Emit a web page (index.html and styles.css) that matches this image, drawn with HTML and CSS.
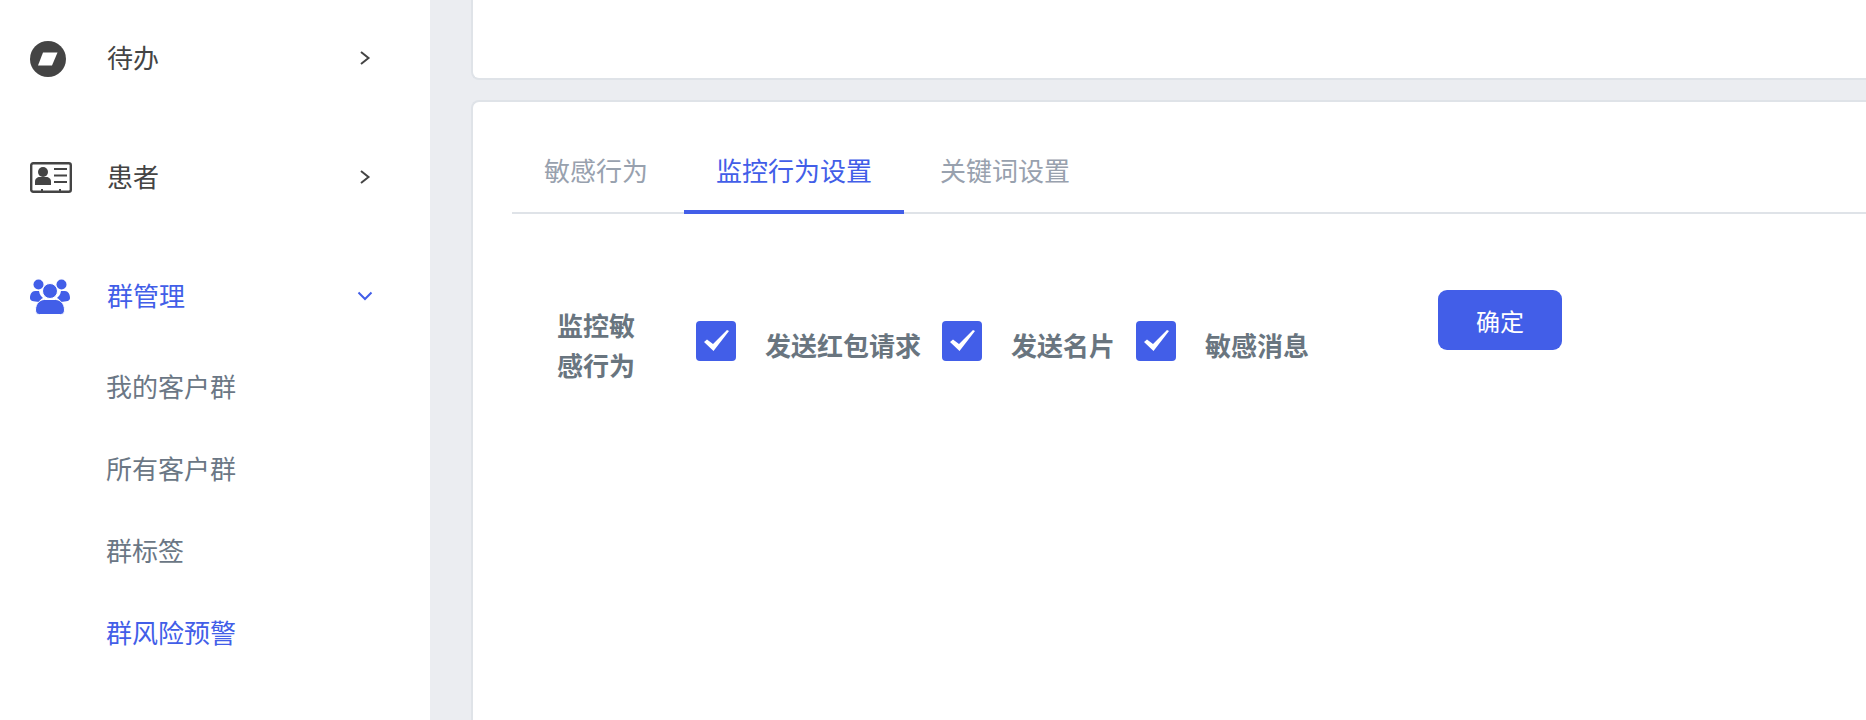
FILE: index.html
```html
<!DOCTYPE html>
<html lang="zh-CN">
<head>
    <meta charset="UTF-8">
    <title>群风险预警</title>
    <link rel="stylesheet" href="styles.css">
</head>
<body>
    <aside class="sidebar">
        <div class="nav-item">
            <svg class="nav-icon" viewBox="0 0 36 36"><circle cx="18" cy="18" r="18" fill="#444"/><path d="M13 11.500h14.500l-5.500 13H8z" fill="#fff"/></svg>
            <span class="nav-label">待办</span>
            <svg class="nav-arrow" viewBox="0 0 12 16"><path d="M2 2l7.500 6L2 14" fill="none" stroke="#444" stroke-width="2"/></svg>
        </div>
        <div class="nav-item">
            <svg class="nav-icon nav-icon-card" viewBox="0 0 42 32"><rect x="1.200" y="1.200" width="39.600" height="28.600" rx="2" fill="none" stroke="#444" stroke-width="2.400"/><circle cx="13" cy="10" r="5" fill="#444"/><path d="M5 23v-3.500c0-3 2.500-4.500 4.500-4.500h7c2 0 4.500 1.500 4.500 4.500V23z" fill="#444"/><path d="M24 7h13M24 13.500h13M24 20h13" stroke="#444" stroke-width="2.200"/><path d="M11 27h2v2h-2zM29 27h2v2h-2z" fill="#444"/></svg>
            <span class="nav-label">患者</span>
            <svg class="nav-arrow" viewBox="0 0 12 16"><path d="M2 2l7.500 6L2 14" fill="none" stroke="#444" stroke-width="2"/></svg>
        </div>
        <div class="nav-item is-active">
            <svg class="nav-icon nav-icon-group" viewBox="0 0 40 36"><circle cx="8.500" cy="5.500" r="5" fill="#425ee8"/><circle cx="31.500" cy="5.500" r="5" fill="#425ee8"/><path d="M0 19c0-4 2-7 5-7h4c.5 4 3 6 4 7-2 1-3 2-3.500 4C3 22.500 0 22 0 19zM40 19c0-4-2-7-5-7h-4c-.5 4-3 6-4 7 2 1 3 2 3.500 4 6.500-.500 9.500-1 9.500-4z" fill="#425ee8"/><circle cx="20" cy="12" r="7.500" fill="#425ee8" stroke="#fff" stroke-width="1"/><path d="M5.500 31c0-7 5-10.500 9-10.500h11c4 0 9 3.500 9 10.500 0 3-1.500 4.500-4 4.500H9.500c-2.500 0-4-1.500-4-4.500z" fill="#425ee8" stroke="#fff" stroke-width="1"/></svg>
            <span class="nav-label">群管理</span>
            <svg class="nav-arrow nav-arrow-down" viewBox="0 0 16 10"><path d="M1.500 1.500L8 8l6.500-6.500" fill="none" stroke="#425ee8" stroke-width="2"/></svg>
        </div>
        <div class="sub-list">
            <div class="sub-item">我的客户群</div>
            <div class="sub-item">所有客户群</div>
            <div class="sub-item">群标签</div>
            <div class="sub-item is-active">群风险预警</div>
        </div>
    </aside>

    <main class="content">
        <section class="card card-top"></section>
        <section class="card card-main">
            <div class="tabs">
                <div class="tab">敏感行为</div>
                <div class="tab is-active">监控行为设置</div>
                <div class="tab">关键词设置</div>
            </div>
            <form class="form-row">
                <div class="form-label">监控敏感行为</div>
                <div class="check-group">
                    <label class="check"><span class="check-box"><svg viewBox="0 0 25 21"><path d="M0 12l3-2.500L9 14 23 0l2 1L9.500 21z" fill="#fff"/></svg></span><span class="check-text">发送红包请求</span></label>
                    <label class="check"><span class="check-box"><svg viewBox="0 0 25 21"><path d="M0 12l3-2.500L9 14 23 0l2 1L9.500 21z" fill="#fff"/></svg></span><span class="check-text">发送名片</span></label>
                    <label class="check"><span class="check-box"><svg viewBox="0 0 25 21"><path d="M0 12l3-2.500L9 14 23 0l2 1L9.500 21z" fill="#fff"/></svg></span><span class="check-text">敏感消息</span></label>
                </div>
                <button class="btn-primary" type="button">确定</button>
            </form>
        </section>
    </main>
</body>
</html>
```

FILE: styles.css
```css
* {
    margin: 0;
    padding: 0;
    box-sizing: border-box;
}

html, body {
    height: 100%;
    overflow: hidden;
}

body {
    display: flex;
    background-color: #ebedf1;
    font-family: "Noto Sans CJK SC", "Noto Sans", sans-serif;
}

.sidebar {
    width: 430px;
    flex-shrink: 0;
    background-color: #fff;
    margin-top: -2px;
}

.nav-item {
    height: 119px;
    display: flex;
    align-items: center;
    padding-left: 30px;
    color: #444;
    font-size: 26px;
}

.nav-item.is-active {
    color: #425ee8;
}

.nav-icon {
    width: 36px;
    height: 36px;
    margin-top: 2px;
    margin-right: 41px;
}

.nav-icon-card {
    width: 42px;
    height: 32px;
    margin-right: 35px;
}

.nav-icon-group {
    width: 40px;
    height: 36px;
    margin-right: 37px;
}

.nav-label {
    flex: 1;
    padding-bottom: 3px;
}

.nav-arrow {
    width: 12px;
    height: 16px;
    margin-right: 59px;
}

.nav-arrow-down {
    width: 16px;
    height: 10px;
    margin-right: 57px;
}

.sub-list {
    margin-top: -10px;
}

.sub-item {
    height: 82px;
    line-height: 82px;
    padding-left: 106px;
    color: #6b7785;
    font-size: 26px;
}

.sub-item.is-active {
    color: #425ee8;
}

.content {
    flex: 1;
    min-width: 0;
    padding-left: 41px;
}

.card {
    background-color: #fff;
    border: 2px solid #dfe3e8;
    border-right: none;
}

.card-top {
    height: 80px;
    border-top: none;
    border-bottom-left-radius: 8px;
    margin-bottom: 20px;
}

.card-main {
    height: 640px;
    border-bottom: none;
    border-top-left-radius: 8px;
    padding: 0 0 0 39px;
}

.tabs {
    display: flex;
    margin-top: 28px;
    height: 84px;
    border-bottom: 2px solid #dfe3e8;
}

.tab {
    height: 84px;
    line-height: 80px;
    padding: 0 32px;
    margin-right: 4px;
    color: #98a1ae;
    font-size: 26px;
    border-bottom: 4px solid transparent;
}

.tab.is-active {
    color: #425ee8;
    border-bottom-color: #425ee8;
}

.form-row {
    display: flex;
    align-items: flex-start;
    margin-top: 76px;
    padding-left: 45px;
}

.form-label {
    width: 84px;
    margin-top: 15px;
    margin-right: 55px;
    color: #69757f;
    font-size: 26px;
    line-height: 40px;
    font-weight: 700;
}

.check-group {
    display: flex;
    margin-top: 26px;
}

.check {
    display: flex;
    align-items: center;
    margin-right: 21px;
}

.check-box {
    width: 40px;
    height: 40px;
    display: flex;
    align-items: center;
    justify-content: center;
    background-color: #425ee8;
    border-radius: 4px;
    margin-right: 29px;
}

.check-box svg {
    width: 25px;
    height: 21px;
}

.check-text {
    color: #69757f;
    font-size: 26px;
    font-weight: 700;
    line-height: 40px;
    padding-top: 9px;
}

.btn-primary {
    width: 124px;
    height: 60px;
    margin-left: 108px;
    border: none;
    border-radius: 9px;
    background-color: #425ee8;
    color: #fff;
    font-family: inherit;
    font-size: 24px;
}
```
